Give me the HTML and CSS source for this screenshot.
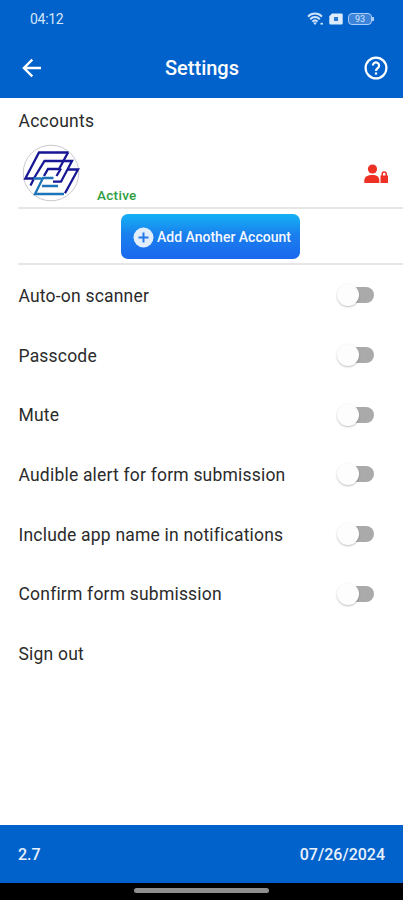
FILE: index.html
```html
<!DOCTYPE html>
<html lang="en">
<head>
  <meta charset="UTF-8">
  <meta name="viewport" content="width=device-width, initial-scale=1.0">
  <title>Settings</title>
  <link rel="stylesheet" href="styles.css">
</head>
<body>
  <div class="app">
    <header class="top">
      <div class="status-bar">
        <span class="clock">04:12</span>
        <div class="status-icons">
          <svg width="17" height="14" viewBox="0 0 17 14" fill="none" stroke="#cfe4fb" stroke-width="2">
            <path d="M1 4.600C5 .6 11 .6 15 4.600M3.200 7.200c2.800-2.800 6.800-2.800 9.600 0M5.400 9.600c1.600-1.600 3.600-1.600 5.200 0"/>
            <path d="M6 10.500h4L8 13z" fill="#cfe4fb" stroke="none"/>
            <path d="M13.500 11.700h2.400" stroke-width="1.800"/>
          </svg>
          <svg width="14" height="12" viewBox="0 0 14 12">
            <path d="M3 .5h9.500a1.200 1.200 0 0 1 1.200 1.200v8.600a1.200 1.200 0 0 1-1.200 1.200h-11A1.200 1.200 0 0 1 .3 10.300V3.200z" fill="#dcecfc"/>
            <path d="M5 4h4v4H5z" fill="#2b78d4"/>
          </svg>
          <div class="battery"><span>93</span></div>
        </div>
      </div>
      <nav class="nav-bar">
        <svg class="back" width="20" height="20" viewBox="0 0 20 20" fill="none" stroke="#fff" stroke-width="2.400">
          <path d="M19 10H2.500M10.300 1.600 1.900 10l8.400 8.400"/>
        </svg>
        <h1>Settings</h1>
        <svg class="help" width="24" height="24" viewBox="0 0 24 24" fill="none" stroke="#fff" stroke-width="2.200">
          <circle cx="12" cy="12" r="10.400"/>
          <path d="M8.900 9.600a3.100 3.100 0 1 1 5.100 2.300c-1.200 1-2 1.500-2 3.100"/>
          <path d="M12 16.400v2.200"/>
        </svg>
      </nav>
    </header>

    <main class="content">
      <h2>Accounts</h2>
      <div class="account">
        <svg class="logo" width="58" height="58" viewBox="0 0 58 58" fill="none" stroke-width="2.300">
          <circle cx="29" cy="29" r="27.800" fill="#fff" stroke="#c9c9cd" stroke-width="1"/>
          <g stroke="#171793">
            <path d="M46.500 8.500H17L3.300 34.500h8.500"/>
            <path d="M46 8.500 37 25H26l-4 7"/>
            <path d="M11.500 35.500 8.500 41.500M11.500 35 22.500 17h27.500L39 37.700h-8"/>
            <path d="M45.500 25.500H56L43 49.300"/>
            <path d="M39 24.500 34.500 32"/>
          </g>
          <g stroke="#1d74b8">
            <path d="M11.500 34.500h8M31.500 34H21l-8 16h29M20 42h16"/>
          </g>
        </svg>
        <span class="state">Active</span>
        <svg class="lock-user" width="24" height="20" viewBox="0 0 24 20" fill="#ee3124">
          <circle cx="8.500" cy="5" r="4.600"/>
          <path d="M.3 19v-2.500C.3 12.700 3.800 11 8.300 11s7 1.700 7 5.500V19z"/>
          <path d="M16.500 11.500H24V19h-7.500z"/>
          <path d="M18.200 12v-2c0-2.600 4-2.600 4 0v2" fill="none" stroke="#ee3124" stroke-width="1.500"/>
        </svg>
      </div>
      <div class="add-row">
        <button class="add-button">
          <svg width="21" height="21" viewBox="0 0 21 21">
            <circle cx="10.500" cy="10.500" r="10" fill="#e2eefc"/>
            <path d="M10.500 5.500v10M5.500 10.500h10" stroke="#2578e8" stroke-width="2"/>
          </svg>
          <span>Add Another Account</span>
        </button>
      </div>
      <ul class="options">
        <li><span>Auto-on scanner</span><i class="toggle"></i></li>
        <li><span>Passcode</span><i class="toggle"></i></li>
        <li><span>Mute</span><i class="toggle"></i></li>
        <li><span>Audible alert for form submission</span><i class="toggle"></i></li>
        <li><span>Include app name in notifications</span><i class="toggle"></i></li>
        <li><span>Confirm form submission</span><i class="toggle"></i></li>
        <li><span>Sign out</span></li>
      </ul>
    </main>

    <footer class="bottom">
      <span>2.7</span>
      <span>07/26/2024</span>
    </footer>
    <div class="gesture-bar"><div class="handle"></div></div>
  </div>
</body>
</html>
```

FILE: styles.css
```css
* {
  box-sizing: border-box;
}
body {
  margin: 0;
  background: #fff;
  font-family: Roboto, "Liberation Sans", sans-serif;
  color: #2b2b2b;
}
.app {
  display: flex;
  flex-direction: column;
  height: 900px;
  overflow: hidden;
}
.top {
  height: 98px;
  background: #0262cb;
  color: #fff;
}
.status-bar {
  display: flex;
  justify-content: space-between;
  align-items: center;
  height: 37px;
  padding: 0 29px 0 30px;
}
.clock {
  font-size: 14px;
  letter-spacing: -0.3px;
  color: #d3e5fa;
}
.status-icons {
  display: flex;
  align-items: center;
  gap: 5px;
}
.battery {
  position: relative;
  width: 24px;
  height: 12px;
  margin-right: 2px;
  border: 1px solid #a9cdf5;
  border-radius: 4px;
  background: #3b84da;
  color: #d3e5fa;
  font-size: 9px;
  line-height: 10px;
  text-align: center;
}
.battery::after {
  content: "";
  position: absolute;
  right: -3px;
  top: 3px;
  width: 2px;
  height: 4px;
  background: #a9cdf5;
}
.nav-bar {
  display: flex;
  justify-content: space-between;
  align-items: center;
  height: 61px;
  padding: 0 15px 0 22px;
}
.nav-bar h1 {
  margin: 1px 2px 0 0;
  font-size: 20px;
  font-weight: 500;
}
.content {
  flex: 1;
  padding-left: 18px;
}
.content h2 {
  height: 45px;
  margin: 0;
  padding-left: 0.5px;
  font-size: 17.5px;
  font-weight: 400;
  line-height: 47px;
  letter-spacing: 0.25px;
}
.account {
  display: flex;
  align-items: flex-start;
  height: 66px;
  padding-right: 15px;
  border-bottom: 2px solid #e6e6e6;
}
.logo {
  margin: 1px 0 0 4px;
}
.state {
  margin: 44px auto 0 17px;
  color: #2f9e41;
  font-size: 13.5px;
  font-weight: 500;
  line-height: 17px;
  letter-spacing: 0.3px;
}
.lock-user {
  margin-top: 21px;
}
.add-row {
  display: flex;
  height: 56px;
  padding: 5px 0 0 103px;
  border-bottom: 2px solid #e6e6e6;
}
.add-button {
  display: flex;
  align-items: center;
  gap: 3px;
  width: 179px;
  height: 45px;
  padding: 1px 0 0 12px;
  border: none;
  border-radius: 7px;
  background: linear-gradient(#14b2f5, #1a80ee 45%, #1a68ee);
  color: #f4f9ff;
  font-family: inherit;
  font-size: 14px;
  font-weight: 500;
  white-space: nowrap;
}
.options {
  margin: 0;
  padding: 0;
  list-style: none;
}
.options li {
  display: flex;
  justify-content: space-between;
  align-items: center;
  height: 59.7px;
  padding-right: 29px;
  font-size: 17.5px;
  letter-spacing: 0.2px;
}
.options span {
  padding: 2px 0 0 0.5px;
}
.toggle {
  display: flex;
  align-items: center;
  width: 33px;
  height: 16px;
  margin-top: 1px;
  border-radius: 8px;
  background: #aaa;
}
.toggle::before {
  content: "";
  width: 22px;
  height: 22px;
  margin-left: -4px;
  flex-shrink: 0;
  border-radius: 50%;
  background: #fdfdfd;
  box-shadow: 0 1px 2px rgba(0, 0, 0, 0.25);
}
.bottom {
  display: flex;
  justify-content: space-between;
  align-items: center;
  height: 58px;
  padding: 1px 18px 0;
  background: #0262cb;
  color: #e8f1fd;
  font-size: 16px;
  font-weight: 500;
}
.gesture-bar {
  display: flex;
  justify-content: center;
  height: 17px;
  padding-top: 5px;
  background: #000;
}
.handle {
  width: 135px;
  height: 5px;
  border-radius: 3px;
  background: #8f8f8f;
}
```
